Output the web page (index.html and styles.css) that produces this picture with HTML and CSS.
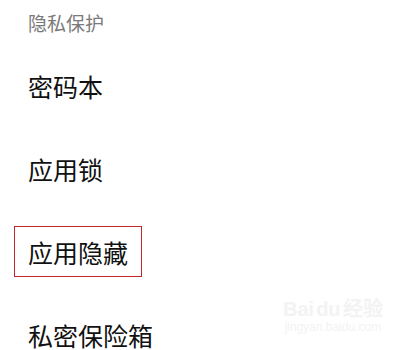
FILE: index.html
```html
<!DOCTYPE html>
<html lang="zh-CN">
<head>
<meta charset="utf-8">
<link rel="stylesheet" href="styles.css">
</head>
<body>
<div class="page">
  <div class="section-title">隐私保护</div>
  <div class="row"><span class="label">密码本</span></div>
  <div class="row"><span class="label">应用锁</span></div>
  <div class="row"><span class="label boxed">应用隐藏</span></div>
  <div class="row"><span class="label">私密保险箱</span></div>
  <div class="watermark">
    <div class="wm-top">Bai<span class="wm-du">du</span>经验</div>
    <div class="wm-url">jingyan.baidu.com</div>
  </div>
</div>
</body>
</html>
```
FILE: styles.css
```css
html, body {
  margin: 0;
  padding: 0;
  background: #ffffff;
}
.page {
  position: relative;
  width: 401px;
  height: 350px;
  overflow: hidden;
  padding-left: 14px;
  box-sizing: border-box;
  font-family: "Noto Sans CJK SC", "Noto Sans", sans-serif;
}
.section-title {
  height: 44px;
  display: flex;
  align-items: center;
  padding-left: 14px;
  font-size: 19px;
  color: #7a7a7a;
}
.row {
  height: 83px;
  display: flex;
  align-items: center;
}
.label {
  display: inline-flex;
  align-items: center;
  height: 51px;
  box-sizing: border-box;
  padding: 0 13px;
  border: 1px solid transparent;
  font-size: 25px;
  color: #111111;
}
.boxed {
  border-color: #c0272d;
}
.watermark {
  position: absolute;
  left: 283px;
  top: 298px;
  color: #f3f3f3;
  font-family: "Liberation Sans", sans-serif;
  text-align: center;
}
.wm-top {
  font-size: 20px;
  font-weight: bold;
  line-height: 22px;
}
.wm-du {
  margin: 0 2px;
}
.wm-url {
  font-size: 12px;
  line-height: 14px;
}
```
